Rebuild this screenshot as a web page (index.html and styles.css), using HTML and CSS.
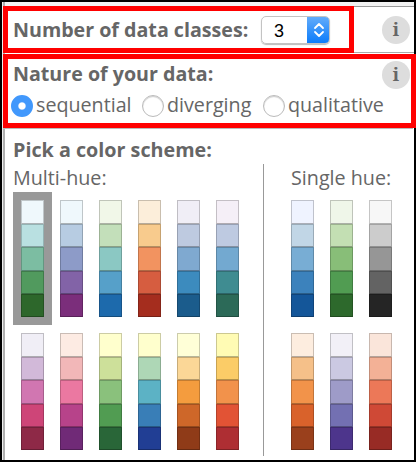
FILE: index.html
```html
<!DOCTYPE html>
<html lang="en">
<head>
<meta charset="utf-8">
<title>Color schemes</title>
<link rel="stylesheet" href="styles.css">
</head>
<body>
<main class="panel">
  <section class="row classes">
    <div class="box count">
      <h2><span class="t-number">Number of data classes:</span></h2>
      <div class="select"><span>3</span><div class="stepper"><svg width="12" height="16" viewBox="0 0 12 16"><path d="M2 6l4-4 4 4M2 10l4 4 4-4"/></svg></div></div>
    </div>
    <div class="info">i</div>
  </section>
  <section class="box nature">
    <div class="head"><h2><span class="t-nature">Nature of your data:</span></h2><div class="info">i</div></div>
    <div class="radios">
      <div class="option sequential"><b class="radio on"></b><span>sequential</span></div>
      <div class="option diverging"><b class="radio"></b><span>diverging</span></div>
      <div class="option qualitative"><b class="radio"></b><span>qualitative</span></div>
    </div>
  </section>
  <section class="schemes">
    <h2><span class="t-pick">Pick a color scheme:</span></h2>
    <div class="groups">
      <div class="multi">
        <h3><span class="t-multi">Multi-hue:</span></h3>
        <div class="ramps">
          <div class="ramp bugn selected"><i></i><i></i><i></i><i></i><i></i></div>
          <div class="ramp bupu"><i></i><i></i><i></i><i></i><i></i></div>
          <div class="ramp gnbu"><i></i><i></i><i></i><i></i><i></i></div>
          <div class="ramp orrd"><i></i><i></i><i></i><i></i><i></i></div>
          <div class="ramp pubu"><i></i><i></i><i></i><i></i><i></i></div>
          <div class="ramp pubugn"><i></i><i></i><i></i><i></i><i></i></div>
          <div class="ramp purd"><i></i><i></i><i></i><i></i><i></i></div>
          <div class="ramp rdpu"><i></i><i></i><i></i><i></i><i></i></div>
          <div class="ramp ylgn"><i></i><i></i><i></i><i></i><i></i></div>
          <div class="ramp ylgnbu"><i></i><i></i><i></i><i></i><i></i></div>
          <div class="ramp ylorbr"><i></i><i></i><i></i><i></i><i></i></div>
          <div class="ramp ylorrd"><i></i><i></i><i></i><i></i><i></i></div>
        </div>
      </div>
      <div class="single">
        <h3><span class="t-single">Single hue:</span></h3>
        <div class="ramps">
          <div class="ramp blues"><i></i><i></i><i></i><i></i><i></i></div>
          <div class="ramp greens"><i></i><i></i><i></i><i></i><i></i></div>
          <div class="ramp greys"><i></i><i></i><i></i><i></i><i></i></div>
          <div class="ramp oranges"><i></i><i></i><i></i><i></i><i></i></div>
          <div class="ramp purples"><i></i><i></i><i></i><i></i><i></i></div>
          <div class="ramp reds"><i></i><i></i><i></i><i></i><i></i></div>
        </div>
      </div>
    </div>
  </section>
</main>
</body>
</html>
```
FILE: styles.css
```css
* { box-sizing: border-box; }
body { margin: 0; background: #fff; color: #666; font: 20px/24px "Open Sans", "Noto Sans", sans-serif; overflow: hidden; }
h2, h3 { margin: 0; font-size: 20px; line-height: 24px; white-space: nowrap; }
h2 { font-weight: 700; }
h3 { font-weight: 400; }
h2 span, h3 span, .option span { display: inline-block; transform-origin: 0 50%; }
.t-number, .t-nature { transform: scaleX(.982); }
.t-pick, .t-multi, .t-single { transform: scaleX(.986); }
.option span { transform: scaleX(.984); }
.panel { width: 416px; height: 462px; border: 2px solid #000; box-shadow: inset 1px 0 #eee, inset 3px 0 #b0b0b0; padding: 4px 0 0 1px; background: linear-gradient(#f2f2f2 5px, #fff 5px); }
.row { display: flex; align-items: center; height: 47px; border-top: 1px solid #999; border-bottom: 1px solid #aaa; }
.box { border: 5px solid #f00; background: #fff; flex: none; }
.count { width: 351px; height: 47px; display: flex; align-items: center; padding-left: 5px; }
.count h2 { width: 248px; }
.select { width: 69px; height: 28px; display: flex; border: 1px solid #c3c3c3; border-radius: 5px; overflow: hidden; box-shadow: 0 1px 1px #bbb; }
.select span { flex: 1; padding-left: 12px; color: #000; font: 18px/28px "Liberation Sans", sans-serif; }
.stepper { width: 23px; margin: -1px; display: flex; align-items: center; justify-content: center; background: linear-gradient(#65adfa, #087afb); }
.stepper svg { fill: none; stroke: #fff; stroke-width: 1.8; stroke-linecap: round; stroke-linejoin: round; }
.info { flex: none; width: 28px; height: 28px; border-radius: 50%; background: #ddd; text-align: center; font: bold 18px/27px "Noto Serif", "DejaVu Serif", serif; color: #666; }
.row .info { margin-left: 28px; }
.nature { width: 413px; height: 74px; margin-top: 1px; padding: 2px 0 0 5px; }
.head { display: flex; height: 28px; }
.head h2 { width: 369px; padding-top: 1px; }
.radios { display: flex; margin-left: -2px; height: 28px; white-space: nowrap; }
.option { display: flex; align-items: center; gap: 3px; flex: none; }
.sequential { width: 131px; }
.diverging { width: 120.5px; }
.radio { flex: none; width: 22px; height: 22px; border-radius: 50%; border: 1px solid #bbb; box-shadow: inset 0 1px 1px #ccc; margin-top: 6px; }
.option span { margin-top: 3px; }
.on { border: 7px solid #4198fc; box-shadow: none; background: radial-gradient(circle, #fff 3px, #4198fc 4.5px); }
.schemes { padding: 9px 0 0 10px; border-top: 1px solid #bbb; margin-right: 1px; }
.groups { display: flex; margin-top: 2px; }
.multi { width: 251px; height: 292px; border-right: 1px solid #999; }
.single { padding-left: 19px; }
.single h3 { margin-left: 8px; }
.multi h3, .single h3 { height: 28px; padding-top: 2px; }
.ramps { display: grid; grid-template-columns: repeat(6, 39px); grid-auto-rows: 133px; }
.single .ramps { grid-template-columns: repeat(3, 39px); }
.ramp { width: 39px; height: 133px; border: 8px solid transparent; display: grid; grid-template-rows: 24px 23px 24px 23px 23px; }
.selected { border-color: #999; }
.ramp i { border: 1px solid rgba(0,0,0,.2); border-bottom-color: rgba(0,0,0,.28); }
.ramp i:nth-child(1) { background: var(--a); }
.ramp i:nth-child(2) { background: var(--b); }
.ramp i:nth-child(3) { background: var(--c); }
.ramp i:nth-child(4) { background: var(--d); }
.ramp i:nth-child(5) { background: var(--e); }
.bugn { --a:#eff8fc; --b:#b9e0e1; --c:#7cbda2; --d:#519a5e; --e:#2d672b; }
.bupu { --a:#eff8fc; --b:#b7cce2; --c:#8d9bc8; --d:#8263a7; --e:#7b2e7b; }
.gnbu { --a:#f1f7e8; --b:#c3dfba; --c:#8bc8c3; --d:#56a0c9; --e:#1d6aac; }
.orrd { --a:#fceeda; --b:#f8cb8d; --c:#f29360; --d:#d65d40; --e:#a52d1e; }
.pubu { --a:#f0eef6; --b:#becae0; --c:#7fa9d0; --d:#3c8bbe; --e:#1b5c8c; }
.pubugn { --a:#f5eff7; --b:#becae1; --c:#73a9d0; --d:#3f8c91; --e:#2c6a58; }
.purd { --a:#f0eef6; --b:#d2b9d9; --c:#d176b1; --d:#ce4578; --e:#8e2947; }
.rdpu { --a:#fdebe3; --b:#f2b7b8; --c:#eb78a1; --d:#b7438a; --e:#702a77; }
.ylgn { --a:#ffffcd; --b:#cde09a; --c:#8ac17c; --d:#519c52; --e:#296638; }
.ylgnbu { --a:#ffffcd; --b:#aed7b6; --c:#5cb2c5; --d:#397eb7; --e:#213e94; }
.ylorbr { --a:#ffffd7; --b:#fbd797; --c:#f49c3e; --d:#ce6729; --e:#8f3b18; }
.ylorrd { --a:#fffbb4; --b:#fbcc67; --c:#f2924b; --d:#e25335; --e:#ae2e33; }
.blues { --a:#eff3ff; --b:#c1d6e6; --c:#78add4; --d:#3c82bc; --e:#145699; }
.greens { --a:#eff6e9; --b:#c3dfb3; --c:#88be78; --d:#519c52; --e:#2d692c; }
.greys { --a:#f7f7f7; --b:#ccc; --c:#969696; --d:#636363; --e:#252525; }
.oranges { --a:#fdeddf; --b:#f5c089; --c:#f2934a; --d:#d9622b; --e:#9a401c; }
.purples { --a:#f2f0f7; --b:#cbc9e2; --c:#9e9bc8; --d:#7370b2; --e:#4d358c; }
.reds { --a:#fae5da; --b:#f3b196; --c:#ec7858; --d:#cf4936; --e:#982b25; }
```
